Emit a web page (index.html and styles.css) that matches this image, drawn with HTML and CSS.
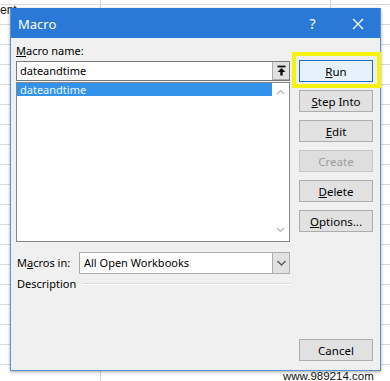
FILE: index.html
```html
<!DOCTYPE html>
<html lang="en">
<head>
  <meta charset="UTF-8" />
  <meta name="viewport" content="width=device-width, initial-scale=1.0" />
  <title>Macro</title>
  <link rel="stylesheet" href="styles.css">
</head>
<body>
  <div class="sheet-text">ent</div>

  <div class="dialog">
    <div class="titlebar">
      <span class="title">Macro</span>
      <span class="caption">?</span>
      <span class="caption">
        <svg width="12" height="12" viewBox="0 0 12 12"><path d="M1 1 L11 11 M11 1 L1 11" stroke="#fff" stroke-width="1.3" fill="none"/></svg>
      </span>
    </div>

    <div class="dialog-body">
      <div class="left-col">
        <div class="lbl"><u>M</u>acro name:</div>
        <div class="name-field">
          <span class="name-text">dateandtime</span>
          <span class="pick-btn">
            <svg width="15" height="16" viewBox="0 0 15 16"><path d="M3.5 3.5 H11.5" stroke="#111" stroke-width="1.8"/><path d="M7.5 5 L3.5 9 H11.5 Z" fill="#111"/><rect x="6.3" y="8.5" width="2.4" height="4" fill="#111"/></svg>
          </span>
        </div>
        <div class="macro-list">
          <div class="list-items">
            <div class="list-item selected">dateandtime</div>
          </div>
          <div class="vscroll">
            <svg width="17" height="14" viewBox="0 0 17 14"><path d="M5 9 L8.5 5.5 L12 9" stroke="#b4b4b4" stroke-width="1.2" fill="none"/></svg>
            <svg width="17" height="14" viewBox="0 0 17 14"><path d="M5 5 L8.5 8.5 L12 5" stroke="#b4b4b4" stroke-width="1.2" fill="none"/></svg>
          </div>
        </div>

        <div class="macros-in">
          <span class="lbl">M<u>a</u>cros in:</span>
          <div class="select">
            <span class="select-text">All Open Workbooks</span>
            <span class="drop-btn">
              <svg width="15" height="20" viewBox="0 0 15 20"><path d="M3.5 8 L7.5 12 L11.5 8" stroke="#555" stroke-width="1.3" fill="none"/></svg>
            </span>
          </div>
        </div>

        <div class="desc">
          <span class="lbl">Description</span>
          <span class="etch"></span>
        </div>
      </div>

      <div class="buttons">
        <div class="run-wrap">
          <button class="btn default"><u>R</u>un</button>
          <span class="highlight"></span>
        </div>
        <button class="btn"><u>S</u>tep Into</button>
        <button class="btn"><u>E</u>dit</button>
        <button class="btn" disabled>Create</button>
        <button class="btn"><u>D</u>elete</button>
        <button class="btn"><u>O</u>ptions...</button>
        <button class="btn cancel">Cancel</button>
      </div>
    </div>
  </div>

  <div class="watermark">www.989214.com</div>
</body>
</html>
```

FILE: styles.css
```css
body {
  margin: 0;
  width: 390px;
  height: 381px;
  overflow: hidden;
  position: relative;
  font-family: "Noto Sans", "Liberation Sans", sans-serif;
  font-size: 11px;
  color: #000;
  background-color: #fff;
  background-image:
    repeating-linear-gradient(to bottom, transparent 0, transparent 4px, #d9d9d9 4px, #d9d9d9 5px, transparent 5px, transparent 20px),
    linear-gradient(to right, transparent 100px, #d4d4d4 100px, #d4d4d4 101px, transparent 101px),
    linear-gradient(to right, transparent 330px, #d4d4d4 330px, #d4d4d4 331px, transparent 331px);
}

.sheet-text {
  font-family: "Liberation Sans", sans-serif;
  font-size: 12px;
  line-height: 12px;
  padding-top: 4px;
  color: #222;
}

/* dialog window */
.dialog {
  position: absolute;
  left: 10px;
  top: 8px;
  width: 371px;
  height: 363px;
  box-sizing: border-box;
  border: 1px solid #5b91cf;
  border-top-color: #2b79d7;
  background: #f0f0f0;
  box-shadow: 0 1px 3px rgba(0, 0, 0, 0.35);
  display: flex;
  flex-direction: column;
}

.titlebar {
  height: 29px;
  background: #2b79d7;
  color: #fff;
  display: flex;
  align-items: center;
  flex-shrink: 0;
}

.title {
  flex: 1;
  padding-left: 7px;
  font-size: 13px;
}

.caption {
  width: 45px;
  height: 29px;
  display: flex;
  align-items: center;
  justify-content: center;
  font-size: 14px;
}

.dialog-body {
  flex: 1;
  display: flex;
  gap: 9px;
  padding: 5px 7px 9px 5px;
}

.left-col {
  width: 274px;
  display: flex;
  flex-direction: column;
}

.lbl {
  line-height: 16px;
  white-space: nowrap;
}

.name-field {
  margin-top: 2px;
  height: 20px;
  box-sizing: border-box;
  border: 1px solid #7a7a7a;
  background: #fff;
  display: flex;
}

.name-text {
  flex: 1;
  padding-left: 3px;
  line-height: 18px;
}

.pick-btn {
  width: 16px;
  height: 17px;
  background: #e1e1e1;
  border-left: 1px solid #adadad;
  border-bottom: 1px solid #adadad;
  display: flex;
  align-items: center;
  justify-content: center;
}

.macro-list {
  margin-top: 1px;
  height: 160px;
  box-sizing: border-box;
  border: 1px solid #828790;
  background: #fff;
  display: flex;
}

.list-items {
  flex: 1;
}

.list-item {
  height: 13px;
  line-height: 13px;
  padding-left: 3px;
}

.list-item.selected {
  background: #3393ea;
  color: #eaf4ff;
}

.vscroll {
  width: 17px;
  display: flex;
  flex-direction: column;
  justify-content: space-between;
  padding: 2px 0 4px;
}

.macros-in {
  margin-top: 10px;
  display: flex;
  align-items: center;
}

.macros-in .lbl {
  width: 62px;
  padding-left: 1px;
}

.select {
  flex: 1;
  height: 22px;
  box-sizing: border-box;
  border: 1px solid #adadad;
  background: #fff;
  display: flex;
}

.select-text {
  flex: 1;
  padding-left: 4px;
  line-height: 20px;
}

.drop-btn {
  width: 16px;
  background: #e1e1e1;
  border-left: 1px solid #adadad;
  display: flex;
  align-items: center;
  justify-content: center;
}

.desc {
  margin-top: 2px;
  display: flex;
  align-items: center;
}

.desc .lbl {
  padding-left: 1px;
}

.etch {
  flex: 1;
  margin-left: 6px;
  height: 1px;
  background: #dcdcdc;
  border-bottom: 1px solid #fff;
}

/* command buttons */
.buttons {
  width: 74px;
  display: flex;
  flex-direction: column;
  gap: 8px;
  padding-top: 17px;
}

.run-wrap {
  position: relative;
  display: flex;
}

.btn {
  width: 74px;
  height: 22px;
  box-sizing: border-box;
  border: 1px solid #adadad;
  background: #e1e1e1;
  font-family: inherit;
  font-size: 11.5px;
  color: #000;
  padding: 0;
}

.btn.default {
  background: #e5f1fb;
  border-color: #1b6fcc;
}

.btn:disabled {
  background: #dedede;
  border-color: #c6c6c6;
  color: #9d9d9d;
}

.btn.cancel {
  margin-top: auto;
}

.highlight {
  position: absolute;
  left: -7px;
  top: -8px;
  right: -8px;
  bottom: -6px;
  border: 4px solid #f3f30d;
  pointer-events: none;
}

.watermark {
  position: absolute;
  left: 283px;
  top: 370px;
  font-family: "Liberation Sans", sans-serif;
  font-size: 11.5px;
  line-height: 13px;
  color: #111;
}
```
